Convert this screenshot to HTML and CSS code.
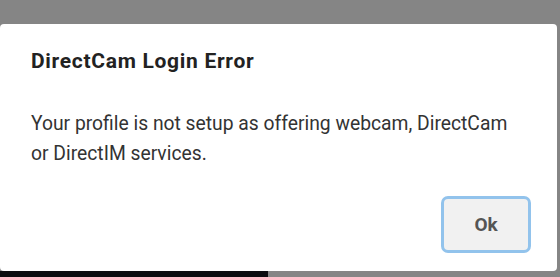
FILE: index.html
```html
<!DOCTYPE html>
<html lang="en">
<head>
<meta charset="UTF-8" />
<meta name="viewport" content="width=device-width, initial-scale=1.0" />
<title>DirectCam Login Error</title>
<link rel="stylesheet" href="styles.css">
</head>
<body>
  <div class="page">
    <div class="dialog">
      <h2 class="dialog-title">DirectCam Login Error</h2>
      <p class="dialog-text">Your profile is not setup as offering webcam, DirectCam or DirectIM services.</p>
      <div class="dialog-actions">
        <button class="btn-ok">Ok</button>
      </div>
    </div>
    <div class="video-strip"></div>
  </div>
</body>
</html>
```

FILE: styles.css
```css
* { box-sizing: border-box; }
body {
  margin: 0;
  background: #858585;
  font-family: Roboto, "Liberation Sans", Arial, sans-serif;
  height: 277px;
  overflow: hidden;
}
.page {
  padding-top: 24px;
}
.dialog {
  width: 557px;
  height: 247px;
  background: #fff;
  border-radius: 4px;
  padding: 23px 26px 18px 31px;
  display: flex;
  flex-direction: column;
}
.dialog-title {
  margin: 0;
  font-size: 21px;
  line-height: 28px;
  font-weight: 700;
  letter-spacing: 0.7px;
  color: #222;
}
.dialog-text {
  margin: 34px 0 0;
  font-size: 19.3px;
  line-height: 30px;
  color: #333;
  max-width: 495px;
}
.dialog-actions {
  margin-top: auto;
  display: flex;
  justify-content: flex-end;
}
.btn-ok {
  width: 90px;
  height: 57px;
  background: #f1f1f1;
  border: 3px solid #92c3ec;
  border-radius: 7px;
  font-family: Roboto, "Liberation Sans", Arial, sans-serif;
  font-size: 19px;
  font-weight: 700;
  color: #555;
  cursor: pointer;
}
.video-strip {
  width: 268px;
  height: 6px;
  background: #0b0d10;
}
```
